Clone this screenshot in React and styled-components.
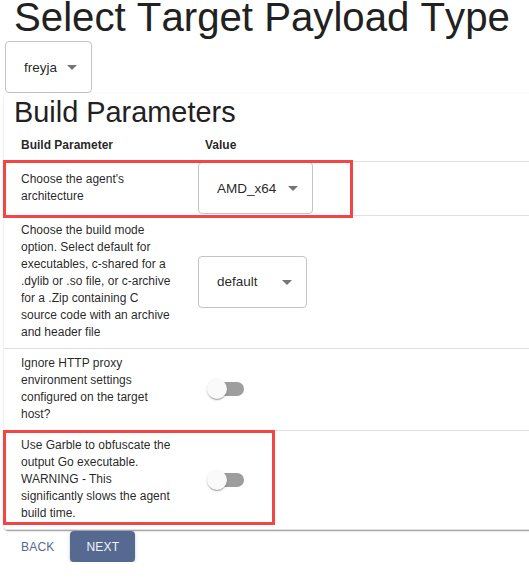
import React from "react";
import styled, { createGlobalStyle } from "styled-components";

const GlobalStyle = createGlobalStyle`
  html, body {
    margin: 0;
    padding: 0;
    background: #ffffff;
    overflow: hidden;
  }
  body {
    font-family: "Liberation Sans", Arial, sans-serif;
    color: rgba(0, 0, 0, 0.87);
  }
`;

const Page = styled.div`
  padding: 0 4px;
  width: 680px;
`;

const Heading = styled.h1`
  margin: 0 0 5px 10px;
  font-size: 40.2px;
  line-height: 36px;
  font-weight: 400;
  font-kerning: none;
  color: #212121;
`;

const Select = styled.div`
  box-sizing: border-box;
  display: flex;
  align-items: center;
  width: ${(props) => props.width}px;
  height: 52px;
  margin-left: ${(props) => (props.inset ? "1px" : "0")};
  padding: 0 7px 0 18px;
  border: 1px solid #c4c4c4;
  border-radius: 4px;
  background: #ffffff;
  font-size: 13.5px;
  color: rgba(0, 0, 0, 0.87);
  white-space: nowrap;
  svg {
    margin-left: auto;
    flex-shrink: 0;
  }
`;

const Paper = styled.div`
  background: #ffffff;
  border-radius: 4px;
  box-shadow: 0 2px 1px -1px rgba(0, 0, 0, 0.2), 0 1px 1px 0 rgba(0, 0, 0, 0.14),
    0 1px 3px 0 rgba(0, 0, 0, 0.12);
`;

const PaperTitle = styled.h2`
  margin: 0;
  padding: 2px 0 0 10px;
  font-size: 28.9px;
  line-height: 34px;
  font-weight: 400;
  font-kerning: none;
  color: #212121;
`;

const Row = styled.div`
  position: relative;
  display: grid;
  grid-template-columns: 185px 1fr;
  border-bottom: 1px solid #e0e0e0;
`;

const HeadCell = styled.div`
  padding: 8px 16px 7px ${(props) => (props.first ? "17px" : "16px")};
  font-size: 12px;
  line-height: 17px;
  font-weight: 700;
  color: rgba(0, 0, 0, 0.87);
`;

const TextCell = styled.div`
  padding: 6px 16px 7px 17px;
  font-size: 12px;
  line-height: 17px;
  color: rgba(0, 0, 0, 0.87);
  display: flex;
  align-items: center;
`;

const ValueCell = styled.div`
  padding: 0 16px 1px 9px;
  display: flex;
  align-items: center;
`;

const SwitchRoot = styled.div`
  width: 58px;
  height: 38px;
  display: flex;
  align-items: center;
  padding-left: 9px;
  box-sizing: border-box;
`;

const Track = styled.div`
  width: 34px;
  height: 14px;
  border-radius: 7px;
  background: #9e9e9e;
  margin-left: -17px;
`;

const Thumb = styled.div`
  width: 20px;
  height: 20px;
  border-radius: 50%;
  background: #fafafa;
  box-shadow: 0 2px 1px -1px rgba(0, 0, 0, 0.2), 0 1px 1px 0 rgba(0, 0, 0, 0.14),
    0 1px 3px 0 rgba(0, 0, 0, 0.12);
  position: relative;
  z-index: 1;
`;

const Highlight = styled.div`
  position: absolute;
  left: -1px;
  top: ${(props) => props.top}px;
  width: ${(props) => props.w}px;
  height: ${(props) => props.h}px;
  box-sizing: border-box;
  border: 3px solid #f44444;
  pointer-events: none;
`;

const Actions = styled.div`
  display: flex;
  align-items: center;
  margin-top: 1px;
  padding-left: 1px;
`;

const Button = styled.button`
  height: 31px;
  padding: 0 16px;
  border: none;
  border-radius: 4px;
  font-family: "Liberation Sans", Arial, sans-serif;
  font-size: 12px;
  letter-spacing: 0.2px;
  cursor: pointer;
  background: ${(props) => (props.primary ? "#566a91" : "transparent")};
  color: ${(props) => (props.primary ? "#f2f4f8" : "#566a91")};
  box-shadow: ${(props) =>
    props.primary
      ? "0 3px 1px -2px rgba(0,0,0,.2), 0 2px 2px 0 rgba(0,0,0,.14), 0 1px 5px 0 rgba(0,0,0,.12)"
      : "none"};
`;

const Arrow = () => (
  <svg width="24" height="24" viewBox="0 0 24 24">
    <path d="M7 10l5 5 5-5z" fill="rgba(0,0,0,0.54)" />
  </svg>
);

const Dropdown = ({ value, width, inset }) => (
  <Select width={width} inset={inset}>
    {value}
    <Arrow />
  </Select>
);

const Toggle = () => (
  <SwitchRoot>
    <Thumb />
    <Track />
  </SwitchRoot>
);

const params = [
  {
    label: "Choose the agent's architecture",
    control: <Dropdown value="AMD_x64" width={115} />,
    highlight: { top: -2, w: 350, h: 58 },
  },
  {
    label:
      "Choose the build mode option. Select default for executables, c-shared for a .dylib or .so file, or c-archive for a .Zip containing C source code with an archive and header file",
    control: <Dropdown value="default" width={109} />,
  },
  {
    label: "Ignore HTTP proxy environment settings configured on the target host?",
    control: <Toggle />,
  },
  {
    label:
      "Use Garble to obfuscate the output Go executable. WARNING - This significantly slows the agent build time.",
    control: <Toggle />,
    highlight: { top: -1, w: 272, h: 95 },
  },
];

export default function App() {
  return (
    <Page>
      <GlobalStyle />
      <Heading>Select Target Payload Type</Heading>
      <Dropdown value="freyja" width={87} inset />
      <Paper>
        <PaperTitle>Build Parameters</PaperTitle>
        <Row>
          <HeadCell first>Build Parameter</HeadCell>
          <HeadCell>Value</HeadCell>
        </Row>
        {params.map((p, i) => (
          <Row key={i}>
            <TextCell>{p.label}</TextCell>
            <ValueCell>{p.control}</ValueCell>
            {p.highlight && (
              <Highlight top={p.highlight.top} w={p.highlight.w} h={p.highlight.h} />
            )}
          </Row>
        ))}
      </Paper>
      <Actions>
        <Button>BACK</Button>
        <Button primary>NEXT</Button>
      </Actions>
    </Page>
  );
}
